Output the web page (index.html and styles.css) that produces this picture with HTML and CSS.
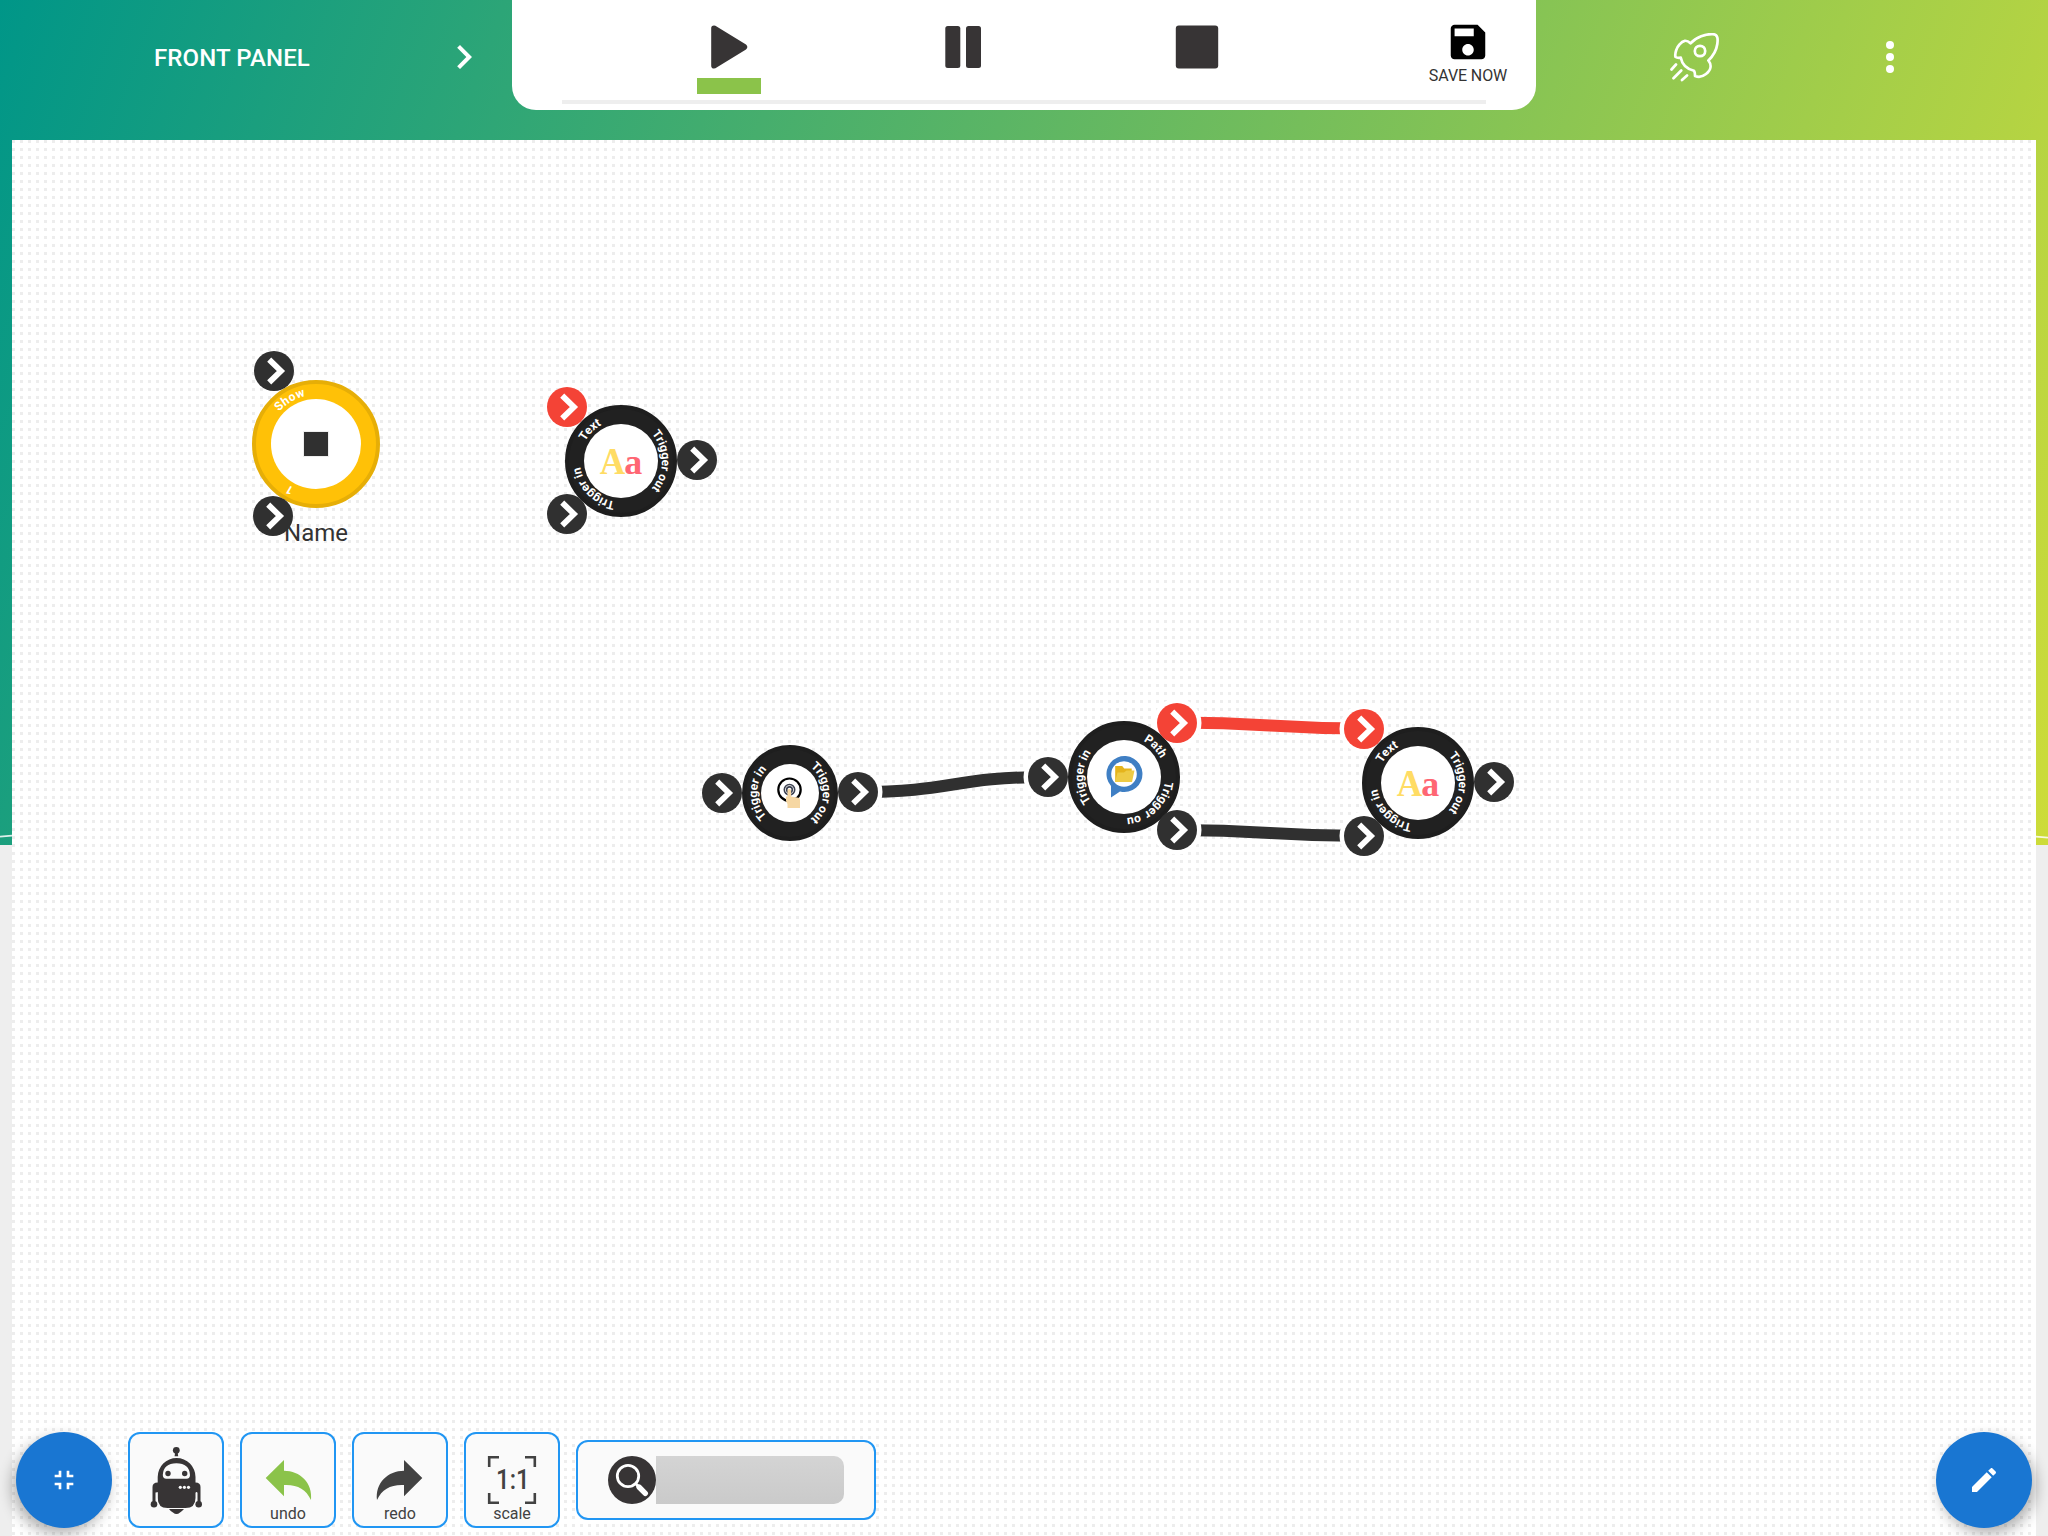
FILE: index.html
```html
<!DOCTYPE html>
<html lang="en">
<head>
<meta charset="utf-8">
<title>Front panel</title>
<link rel="stylesheet" href="styles.css">
</head>
<body>
<div class="app">
  <div class="backdrop">
    <svg class="wave-line" viewBox="0 0 2048 12" preserveAspectRatio="none"><path d="M0 3.6 L12 2.6 M2036 3.6 L2048 4.6"/></svg>
  </div>
  <header class="header">
    <div class="panel-switch">
      <span class="panel-title">FRONT PANEL</span>
      <svg class="chevron" viewBox="0 0 24 24"><path d="M10 6L8.59 7.41 13.17 12l-4.58 4.59L10 18l6-6z"/></svg>
    </div>
    <div class="toolbar">
      <div class="tools">
        <button class="tool">
          <svg class="tool-icon" viewBox="0 0 48 48"><path d="M9 2.5 q-2.800 0 -2.800 2.800 V42.700 q0 2.800 2.800 2.800 q1.500 0 2.600 -.9 L41 26.500 q2.700 -2.500 0 -5 L11.600 3.400 q-1.100 -.9 -2.600 -.9Z"/></svg>
          <span class="marker"></span>
        </button>
        <button class="tool">
          <svg class="tool-icon" viewBox="0 0 48 48"><rect x="6.300" y="3" width="15" height="42" rx="2.500"/><rect x="27" y="3" width="15" height="42" rx="2.500"/></svg>
        </button>
        <button class="tool">
          <svg class="tool-icon" viewBox="0 0 48 48"><rect x="2.800" y="2.600" width="42.400" height="42.800" rx="3"/></svg>
        </button>
        <button class="save">
          <svg class="save-icon" viewBox="0 0 24 24"><path d="M17 3H5c-1.110 0-2 .9-2 2v14c0 1.100.89 2 2 2h14c1.100 0 2-.9 2-2V7l-4-4zm-5 16c-1.660 0-3-1.340-3-3s1.340-3 3-3 3 1.340 3 3-1.340 3-3 3zm3-10H5V5h10v4z"/></svg>
          <span>SAVE NOW</span>
        </button>
      </div>
      <div class="progress"></div>
    </div>
    <div class="actions">
      <svg class="rocket" viewBox="0 0 49 49"><path d="M20.500 10.300C26 4 36 .8 43 1.200C48 1.500 48 6 47.300 11C46.500 17 43 23 38.400 27.500C42 32 41 37 36 41C33 43.500 29 44.500 25 43C25 41 25.200 39.500 24 37.700C17 36 12 31 10.800 24.700C8.500 25 7 25 5.500 24C4.500 20 7 14 9.500 11.500C13 7 16.500 6.500 20.500 10.300Z"/><circle cx="30" cy="18" r="5.200"/><path d="M6 31.500L1.500 36.500M11.200 37.500L3.500 45.300M17 42.500L12 47"/></svg>
      <svg class="more" viewBox="0 0 24 24"><circle cx="12" cy="6" r="2"/><circle cx="12" cy="12" r="2"/><circle cx="12" cy="18" r="2"/></svg>
    </div>
  </header>

  <main class="board">
    <svg class="diagram" viewBox="12 140 2024 1396">
      <defs>
        <g id="port"><circle r="20"/><path class="arrow" d="M-4.800 -11.300L6.900 0L-4.800 11.300"/></g>
        <path id="ring33" d="M0 33A33 33 0 0 1 0 -33A33 33 0 0 1 0 33"/>
        <path id="ring33r" d="M-33 0A33 33 0 0 1 33 0A33 33 0 0 1 -33 0"/>
        <path id="ring41" d="M0 41A41 41 0 0 1 0 -41A41 41 0 0 1 0 41"/>
        <path id="ring41r" d="M-41 0A41 41 0 0 1 41 0A41 41 0 0 1 -41 0"/>
        <path id="ring41b" d="M41 0A41 41 0 0 1 -41 0A41 41 0 0 1 41 0"/>
        <path id="ring49" d="M0 49A49 49 0 0 1 0 -49A49 49 0 0 1 0 49"/>
        <g id="text-node">
          <circle class="disc" r="54"/><circle class="hole" r="37"/>
          <text class="ring-text"><textPath href="#ring41" startOffset="37.500%">Text</textPath></text>
          <text class="ring-text"><textPath href="#ring41r" startOffset="50%">Trigger out</textPath></text>
          <text class="ring-text"><textPath href="#ring41" startOffset="12.500%">Trigger in</textPath></text>
          <text class="glyph-upper" x="-21.300" y="13.400" textLength="25.500" lengthAdjust="spacingAndGlyphs">A</text>
          <text class="glyph-lower" x="3.300" y="13.400" textLength="18" lengthAdjust="spacingAndGlyphs">a</text>
          <use href="#port" class="port alert" x="-54" y="-54"/>
          <use href="#port" class="port" x="-54" y="53"/>
          <use href="#port" class="port" x="76" y="-1"/>
        </g>
      </defs>

      <g class="links">
        <path class="link" d="M858 792C953 792 953 777 1048 777"/>
        <path class="link alert-link" d="M1177 722.500C1270 722.500 1270 728.500 1364 728.500"/>
        <path class="link" d="M1177 830C1270 830 1270 836 1364 836"/>
      </g>
      <g class="halos">
        <circle cx="858" cy="792" r="24.500"/><circle cx="1048" cy="777" r="24.500"/>
        <circle cx="1177" cy="723" r="24.500"/><circle cx="1364" cy="729" r="24.500"/>
        <circle cx="1177" cy="830" r="24.500"/><circle cx="1364" cy="836" r="24.500"/>
      </g>

      <g transform="translate(316 444)">
        <circle class="disc amber" r="62"/><circle class="hole" r="45"/>
        <text class="ring-text"><textPath href="#ring49" startOffset="41.500%" textLength="31">Show</textPath></text>
        <text class="ring-text"><textPath href="#ring49" startOffset="8.300%">1</textPath></text>
        <rect class="stop-mark" x="-12" y="-12" width="24" height="24"/>
        <text class="node-name" y="96.500">Name</text>
        <use href="#port" class="port" x="-42" y="-73"/>
        <use href="#port" class="port" x="-43" y="72"/>
      </g>

      <use href="#text-node" x="621" y="461"/>

      <g transform="translate(790 793)">
        <circle class="disc" r="46"/><circle class="hole" r="29"/>
        <text class="ring-text"><textPath href="#ring33" startOffset="25%">Trigger in</textPath></text>
        <text class="ring-text"><textPath href="#ring33r" startOffset="50%">Trigger out</textPath></text>
        <circle class="tap-ring" cx="-.5" cy="-3.300" r="11.200"/>
        <g class="tap-waves"><circle cx="-.5" cy="-3.300" r="5.200"/><circle cx="-.5" cy="-3.300" r="2.800"/></g>
        <path class="hand" d="M-2.500 -2q0-2 1.800-2t1.800 2V3.500L8.500 4.700q1.500 .4 1.500 2V15H-2.500V11L-4 8V3.500h1.500Z"/>
        <use href="#port" class="port" x="-68" y="0"/>
        <use href="#port" class="port" x="68" y="-1"/>
      </g>

      <g transform="translate(1124 777)">
        <circle class="disc" r="54"/><circle class="hole" r="37"/>
        <text class="ring-text"><textPath href="#ring41" startOffset="25%">Trigger in</textPath></text>
        <text class="ring-text"><textPath href="#ring41r" startOffset="37.700%">Path</textPath></text>
        <text class="ring-text ring-text-start"><textPath href="#ring41b" startOffset="1.700%">Trigger<tspan dx="1.500"> ou</tspan></textPath></text>
        <path class="bubble" d="M-13 20.500V9A18 18 0 1 1 -4 14.500Z"/>
        <circle class="hole" cx="0" cy="-3" r="12.800"/>
        <path class="folder-back" d="M-8.800 -11h7l2 2.500h7.500V4.500H-8.800Z"/>
        <path class="folder-front" d="M-6.500 -4.500L0 -4.500L2.500 -6.500L10.500 -6.500L8 5H-9Z"/>
        <use href="#port" class="port" x="-76" y="0"/>
        <use href="#port" class="port alert" x="53" y="-54"/>
        <use href="#port" class="port" x="53" y="53"/>
      </g>

      <use href="#text-node" x="1418" y="783"/>
    </svg>

    <footer class="dock">
      <button class="fab fab-left"><svg viewBox="0 0 24 24"><path d="M5 16h3v3h2v-5H5v2zm3-8H5v2h5V5H8v3zm6 11h2v-3h3v-2h-5v5zm2-11V5h-2v5h5V8h-3z"/></svg></button>
      <button class="tile">
        <svg class="tile-art robot" viewBox="0 0 96 96">
          <circle cx="48.300" cy="18.300" r="3.400"/><path d="M47.200 20h2.400l.6 4.200h-3.600z"/>
          <path d="M29.700 45A18.900 19 0 0 1 67.500 45V50.500Q72.500 50.500 72.500 55V70H69.500V60.500H67.500V66Q67.500 76 57.500 76H39.500Q29.700 76 29.700 66V60.500H27.500V70H24.500V55Q24.500 50.500 29.700 50.500Z"/>
          <circle cx="26" cy="72.300" r="3.300"/><circle cx="70.700" cy="72.300" r="3.300"/>
          <path d="M41 77H56Q54 79 52 80.500Q48.500 83.500 45 80.500Q42.500 79 41 77Z"/>
          <path class="light" d="M34.800 43Q35.500 31.300 48.400 31.300T62 43Q62 46.700 58.500 46.700H38.300Q34.800 46.700 34.800 43ZM28.700 60h.8v8h-.8zM68 60h.8v8H68z"/>
          <circle cx="40" cy="41.500" r="2.700"/><circle cx="56.700" cy="41.500" r="2.700"/>
          <g class="light"><circle cx="52.300" cy="55.300" r="1.600"/><circle cx="56.400" cy="55.300" r="1.600"/><circle cx="60.500" cy="55.300" r="1.600"/></g>
        </svg>
      </button>
      <button class="tile">
        <svg class="tile-art undo" viewBox="0 0 96 96"><path d="M25.700 46L44 28V38.700C60 38.700 73 51 71 68C66 57 57 52.300 44 53V64.300Z"/></svg>
        <span class="tile-label">undo</span>
      </button>
      <button class="tile">
        <svg class="tile-art redo" viewBox="0 0 96 96"><path d="M70.300 46L52 28V38.700C36 38.700 23 51 25 68C30 57 39 52.300 52 53V64.300Z"/></svg>
        <span class="tile-label">redo</span>
      </button>
      <button class="tile">
        <svg class="tile-art scale" viewBox="0 0 96 96"><path d="M25.200 35V25.200H35M61 25.200H70.800V35M70.800 61V70.800H61M35 70.800H25.200V61"/><text x="48.800" y="57.200" textLength="33.500" lengthAdjust="spacingAndGlyphs">1:1</text></svg>
        <span class="tile-label">scale</span>
      </button>
      <div class="search">
        <svg class="search-icon" viewBox="-24 -24 48 48"><circle r="24"/><g><circle class="lens" cx="-4" cy="-4" r="10.700"/><path class="stem" d="M4 4L7 7"/><path class="handle" d="M7 7L13.300 13.300"/></g></svg>
        <div class="search-field"></div>
      </div>
      <button class="fab fab-right"><svg viewBox="0 0 24 24"><path d="M3 17.250V21h3.750L17.810 9.940l-3.750-3.750L3 17.250zM20.710 7.040c.39-.39.39-1.020 0-1.410l-2.340-2.340c-.39-.39-1.020-.39-1.410 0l-1.830 1.830 3.750 3.750 1.830-1.830z"/></svg></button>
    </footer>
  </main>
</div>
</body>
</html>
```
FILE: styles.css
```css
* { box-sizing: border-box; }

body {
  margin: 0;
  background: #eee;
  color: #333;
  font-family: Roboto, "Noto Sans", sans-serif;
}

button {
  border: 0;
  padding: 0;
  background: none;
  color: inherit;
  font: inherit;
}

svg { display: block; }

.app {
  position: relative;
  display: flex;
  flex-direction: column;
  width: 2048px;
  height: 1536px;
  overflow: hidden;
}

.backdrop {
  position: absolute;
  inset: 0 0 auto;
  height: 845px;
  padding-top: 833px;
  background: linear-gradient(110deg, #009688, #cddc39);
}

.wave-line { width: 2048px; height: 12px; }
.wave-line path { stroke: #fff; stroke-width: 1.6; opacity: .85; }

.header {
  position: relative;
  display: grid;
  grid-template-columns: 512px 1024px 512px;
  height: 140px;
  color: #fff;
}

.panel-switch {
  display: flex;
  align-items: center;
  justify-content: space-between;
  height: 114px;
  padding: 0 24px 0 154px;
}

.panel-title {
  font-size: 24px;
  font-weight: 500;
  line-height: 28px;
  letter-spacing: .12px;
  padding-top: 1px;
}

.chevron { width: 48px; height: 48px; fill: #fff; }

.toolbar {
  height: 110px;
  background: #fff;
  border-radius: 0 0 24px 24px;
  color: #333;
}

.tools {
  display: grid;
  grid-template-columns: 234px 234px 320px 136px;
  height: 100px;
  padding-left: 100px;
}

.tool {
  display: flex;
  flex-direction: column;
  align-items: center;
  gap: 7px;
  width: 234px;
  padding-top: 23px;
}

.tool-icon { width: 48px; height: 48px; fill: #373435; }
.marker { width: 64px; height: 16px; background: #8bc34a; }

.save {
  display: flex;
  flex-direction: column;
  align-items: center;
  gap: 1px;
  padding-top: 19px;
  font-size: 16px;
  line-height: 20px;
  letter-spacing: -.1px;
}

.save-icon { width: 46px; height: 46px; fill: #000; }

.progress {
  height: 4px;
  margin: 0 50px;
  background: #eee;
}

.actions {
  display: flex;
  align-items: center;
  gap: 147px;
  height: 114px;
  padding-left: 134px;
}

.rocket {
  width: 49px;
  height: 49px;
  fill: none;
  stroke: #fff;
  stroke-width: 2.7;
  stroke-linecap: round;
  stroke-linejoin: round;
}

.more { width: 48px; height: 48px; fill: #fff; }

.board {
  position: relative;
  display: flex;
  flex-direction: column;
  width: 2024px;
  height: 1396px;
  margin: 0 12px;
  background: #fff conic-gradient(at 3px 3px, transparent 270deg, #ededed 0) 0 0 / 8px 8px;
}

.diagram { width: 2024px; height: 1396px; }

.disc { fill: #212121; stroke: #1e1e1e; stroke-width: 4; }
.disc.amber { fill: #ffc107; stroke: #e6ae07; }
.hole { fill: #fff; }

.ring-text {
  fill: #fff;
  font-size: 12px;
  font-weight: 700;
  text-anchor: middle;
}

.ring-text-start { text-anchor: start; }

.port { fill: #303030; }
.port.alert { fill: #f44336; }
.arrow { fill: none; stroke: #fff; stroke-width: 5.8; }

.link { fill: none; stroke: #303030; stroke-width: 12; }
.alert-link { stroke: #f44336; }
.halos { fill: #fff; }

.stop-mark { fill: #303030; stroke: #eee; stroke-width: 2; paint-order: stroke; }
.node-name { font-size: 24px; text-anchor: middle; fill: #333; }

.glyph-upper, .glyph-lower { font-family: "Liberation Serif", serif; font-weight: 700; }
.glyph-upper { font-size: 38px; fill: #ffdc64; }
.glyph-lower { font-size: 35px; fill: #ff6673; }

.tap-ring { fill: none; stroke: #000; stroke-width: 2.2; }
.tap-waves { fill: none; stroke: #3c4150; stroke-width: 1.6; }
.hand { fill: #f6d7a3; }

.bubble { fill: #3f7fc4; }
.folder-back { fill: #e5b41c; }
.folder-front { fill: #eecb45; }

/* The dock floats over the bottom edge of the board. */
.dock {
  position: absolute;
  inset: auto 4px 8px 4px;
  display: flex;
  align-items: center;
  gap: 16px;
  height: 96px;
}

.fab {
  display: flex;
  align-items: center;
  justify-content: center;
  width: 96px;
  height: 96px;
  border-radius: 50%;
  background: #1976d2;
}

.fab svg { width: 32px; height: 32px; fill: #fff; }
.fab-left { box-shadow: -4px 6px 14px rgba(0, 0, 0, .3); }
.fab-right { margin-left: auto; box-shadow: 4px 6px 14px rgba(0, 0, 0, .3); }

.tile {
  display: grid;
  width: 96px;
  height: 96px;
  border: 2px solid #2196f3;
  border-radius: 12px;
  background: #fafafa;
}

.tile-art, .tile-label { grid-area: 1 / 1; }
.tile-art { width: 96px; height: 96px; margin: -2px; }

.tile-label {
  align-self: end;
  padding-bottom: 2px;
  font-size: 16px;
  line-height: 20px;
  color: #424242;
  text-align: center;
}

.robot { fill: #373435; }
.robot .light { fill: #fafafa; }
.undo { fill: #8bc34a; }
.redo { fill: #424242; }
.scale path { fill: none; stroke: #424242; stroke-width: 2.6; }
.scale text { fill: #424242; font-size: 28px; font-weight: 500; text-anchor: middle; }

.search {
  display: flex;
  align-items: center;
  width: 300px;
  height: 80px;
  padding: 0 30px;
  border: 2px solid #2196f3;
  border-radius: 12px;
  background: #fafafa;
}

.search-icon { width: 48px; height: 48px; fill: #373435; }
.search-icon g { fill: none; stroke: #fff; stroke-width: 2.8; }
.search-icon .handle { stroke-width: 5.4; stroke-linecap: round; }

.search-field {
  flex: 1;
  height: 48px;
  border-radius: 0 10px 10px 0;
  background: linear-gradient(#d4d4d4, #cacaca);
}
```
